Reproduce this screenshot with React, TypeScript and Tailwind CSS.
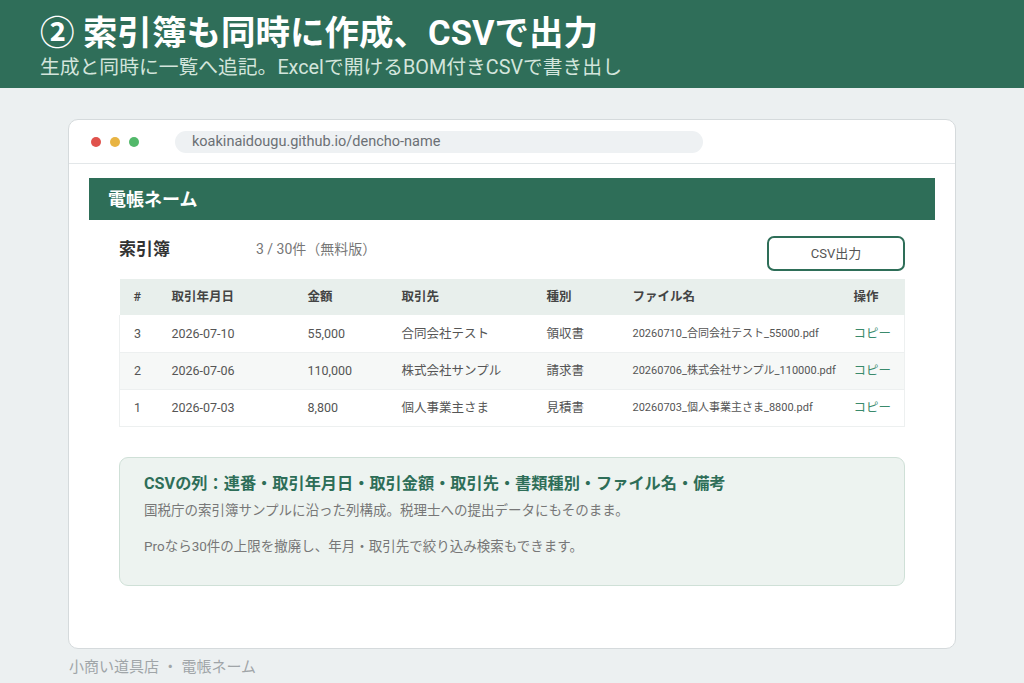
import React from 'react';

const rows = [
  { no: 3, date: '2026-07-10', amount: '55,000', partner: '合同会社テスト', kind: '領収書', file: '20260710_合同会社テスト_55000.pdf' },
  { no: 2, date: '2026-07-06', amount: '110,000', partner: '株式会社サンプル', kind: '請求書', file: '20260706_株式会社サンプル_110000.pdf' },
  { no: 1, date: '2026-07-03', amount: '8,800', partner: '個人事業主さま', kind: '見積書', file: '20260703_個人事業主さま_8800.pdf' },
];

const App: React.FC = () => {
  return (
    <div
      className="w-[1024px] h-[683px] overflow-hidden bg-[#ecf0f1]"
      style={{ fontFamily: 'Roboto, "Noto Sans CJK JP", sans-serif' }}
    >
      <header className="h-[88px] bg-[#2f6e59] pl-[40px] pt-[11px]">
        <h1 className="text-[34.5px] leading-[44px] font-bold text-white">② 索引簿も同時に作成、CSVで出力</h1>
        <p className="text-[19.8px] leading-[26px] text-[#d3e5dc]">
          生成と同時に一覧へ追記。Excelで開けるBOM付きCSVで書き出し
        </p>
      </header>

      <div className="px-[68px] pt-[31px]">
        <div className="h-[530px] bg-white rounded-[10px] border border-[#d5dadc] overflow-hidden">
          <div className="h-[44px] flex items-center border-b border-[#e3e7e9] pl-[22px]">
            <div className="flex gap-[9px]">
              <span className="w-[10px] h-[10px] rounded-full bg-[#e0524c]" />
              <span className="w-[10px] h-[10px] rounded-full bg-[#e8b443]" />
              <span className="w-[10px] h-[10px] rounded-full bg-[#52b86a]" />
            </div>
            <div className="ml-[36px] w-[528px] h-[22px] rounded-full bg-[#eef1f3] flex items-center pl-[17px] text-[14.5px] text-[#6b7075]">
              koakinaidougu.github.io/dencho-name
            </div>
          </div>

          <div className="px-[20px] pt-[14px]">
            <div className="h-[42px] bg-[#2e6e58] flex items-center pl-[19px] text-white font-bold text-[18px]">
              電帳ネーム
            </div>

            <div className="px-[30px]">
              <div className="flex items-center h-[59px]">
                <span className="text-[17px] font-bold text-[#333]">索引簿</span>
                <span className="ml-[86px] text-[14px] text-[#777]">3 / 30件（無料版）</span>
                <button className="ml-auto mt-[8px] w-[138px] h-[35px] border-2 border-[#2e6e58] rounded-[7px] text-[13px] text-[#555] bg-white">
                  CSV出力
                </button>
              </div>

              <table className="w-full border-collapse text-[12.5px] text-[#555]">
                <thead>
                  <tr className="h-[36px] bg-[#e8efec] text-[12.5px] text-[#444]">
                    <th className="pl-[14px] w-[52px] text-left font-semibold">#</th>
                    <th className="w-[136px] text-left font-semibold">取引年月日</th>
                    <th className="w-[94px] text-left font-semibold">金額</th>
                    <th className="w-[145px] text-left font-semibold">取引先</th>
                    <th className="w-[86px] text-left font-semibold">種別</th>
                    <th className="w-[221px] text-left font-semibold">ファイル名</th>
                    <th className="text-left font-semibold">操作</th>
                  </tr>
                </thead>
                <tbody>
                  {rows.map((r, i) => (
                    <tr key={r.no} className={`h-[37px] border-b border-[#edf0f0] ${i === 1 ? 'bg-[#f6f8f7]' : 'bg-white'}`}>
                      <td className="pl-[14px] pt-[2px] border-l border-[#edf0f0]">{r.no}</td>
                      <td className="pt-[2px]">{r.date}</td>
                      <td className="pt-[2px]">{r.amount}</td>
                      <td className="pt-[2px]">{r.partner}</td>
                      <td className="pt-[2px]">{r.kind}</td>
                      <td className="pt-[2px] text-[11px]">{r.file}</td>
                      <td className="pt-[2px] text-[#3a8a6c] border-r border-[#edf0f0]">コピー</td>
                    </tr>
                  ))}
                </tbody>
              </table>

              <div className="mt-[30px] h-[129px] bg-[#edf3f0] border border-[#cfe0d7] rounded-[9px] pl-[24px] pt-[14px]">
                <p className="text-[16.2px] font-bold text-[#2e6e58] leading-[24px]">
                  CSVの列：連番・取引年月日・取引金額・取引先・書類種別・ファイル名・備考
                </p>
                <p className="text-[13.5px] text-[#777] leading-[20px] mt-[4px]">
                  国税庁の索引簿サンプルに沿った列構成。税理士への提出データにもそのまま。
                </p>
                <p className="text-[13.5px] text-[#777] leading-[20px] mt-[16px]">
                  Proなら30件の上限を撤廃し、年月・取引先で絞り込み検索もできます。
                </p>
              </div>
            </div>
          </div>
        </div>
        <p className="mt-[7px] text-[15px] text-[#a0a5a8] pl-[1px]">小商い道具店 ・ 電帳ネーム</p>
      </div>
    </div>
  );
};

export default App;
